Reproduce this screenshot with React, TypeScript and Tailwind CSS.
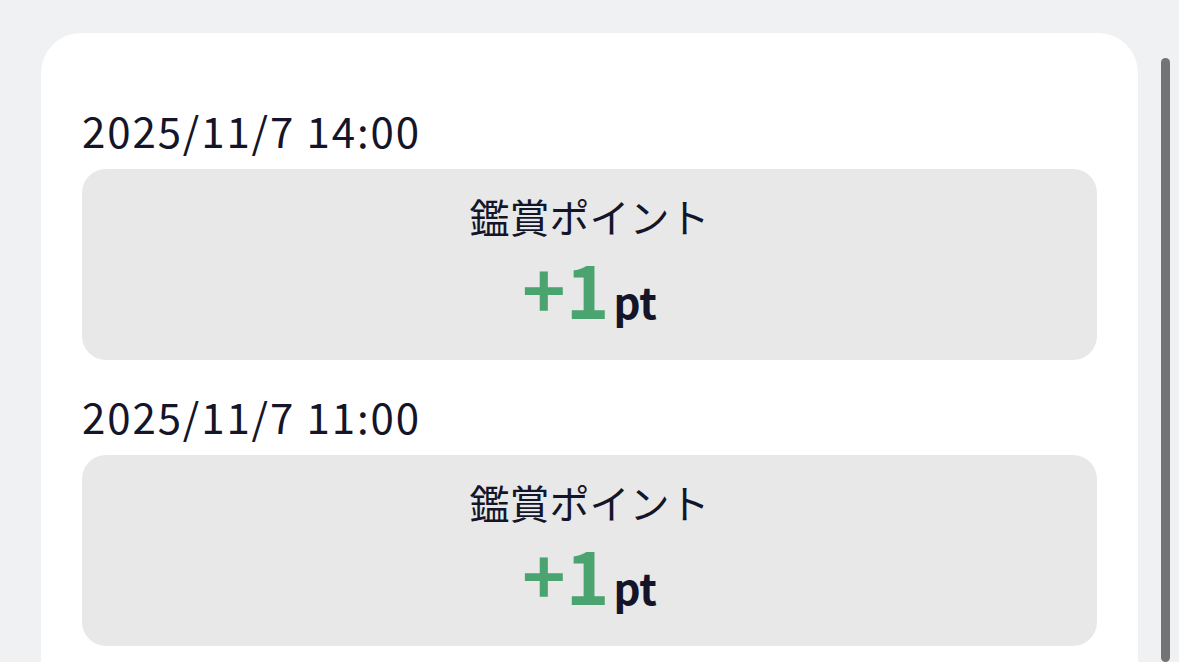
const ENTRIES = [
  { date: '2025/11/7 14:00', label: '鑑賞ポイント', points: 1 },
  { date: '2025/11/7 11:00', label: '鑑賞ポイント', points: 1 },
  { date: '2025/11/7 09:00', label: '鑑賞ポイント', points: 1 },
];

export default function App() {
  return (
    <div
      className="flex h-[662px] w-[1179px] overflow-hidden bg-[#f0f1f3] text-[#15152a]"
      style={{ fontFamily: '"Noto Sans CJK JP", "Noto Sans", sans-serif' }}
    >
      <div className="flex-1 pl-[41px] pt-[33px]">
        <div className="rounded-[40px] bg-white px-[41px] pt-[68px]">
          {ENTRIES.map((e, i) => (
            <div key={i} className="mb-[27px]">
              <div className="mb-[10px] text-[42px] leading-[58px] tracking-[1.9px]">{e.date}</div>
              <div className="flex h-[191px] flex-col items-center rounded-[24px] bg-[#e8e8e8] pt-[23px]">
                <div className="text-[40px] leading-[48px]">{e.label}</div>
                <div className="mt-[10px] flex items-baseline font-bold leading-none">
                  <span className="text-[74px] text-[#4ba370]">+{e.points}</span>
                  <span className="ml-[4px] text-[42px]">pt</span>
                </div>
              </div>
            </div>
          ))}
        </div>
      </div>
      <div className="w-[41px] shrink-0 pl-[23px] pr-[9px] pt-[58px]">
        <div className="h-full rounded-full bg-[#747474]" />
      </div>
    </div>
  );
}
